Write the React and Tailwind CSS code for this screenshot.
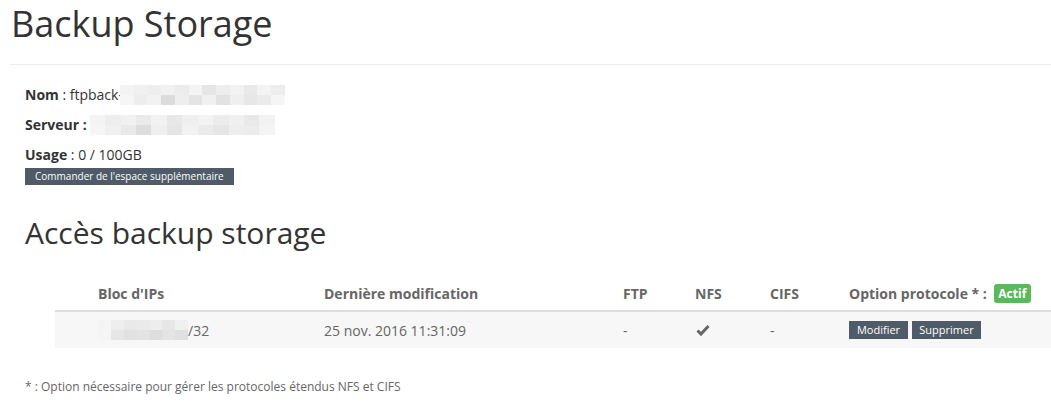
import React from "react";

// Pixelated placeholder used where the screenshot hides values
function Blur({ rows, className }) {
  return (
    <span className={"inline-flex flex-col align-middle " + className}>
      {rows.map((row, i) => (
        <span key={i} className="flex flex-1">
          {row.map((c, j) => (
            <span key={j} className="flex-1" style={{ backgroundColor: c }} />
          ))}
        </span>
      ))}
    </span>
  );
}

const nomBlur = [
  ["#f3f3f3", "#f0f0f0", "#eeeeee", "#f1f1f1", "#ececec", "#f4f4f4", "#e6e6e6", "#eeeeee", "#f2f2f2", "#e9e9e9", "#f3f3f3", "#ededed"],
  ["#f6f6f6", "#ededed", "#f2f2f2", "#dcdcdc", "#eeeeee", "#e4e4e4", "#f0f0f0", "#e2e2e2", "#efefef", "#e7e7e7", "#ebebeb", "#f5f5f5"],
];
const serveurBlur = [
  ["#f4f4f4", "#ededed", "#f1f1f1", "#eaeaea", "#f2f2f2", "#e8e8e8", "#efefef", "#f3f3f3", "#ececec", "#f0f0f0", "#e9e9e9", "#f2f2f2"],
  ["#f6f6f6", "#f0f0f0", "#e9e9e9", "#dddddd", "#efefef", "#e5e5e5", "#f2f2f2", "#ebebeb", "#e6e6e6", "#eeeeee", "#ececec", "#f4f4f4"],
];
const ipBlur = [
  ["#f4f4f4", "#eeeeee", "#e9e9e9", "#eaeaea", "#ededed", "#e7e7e7", "#f0f0f0"],
  ["#f5f5f5", "#e6e6e6", "#e1e1e1", "#e3e3e3", "#dedede", "#e4e4e4", "#e0e0e0"],
];

function Check() {
  return (
    <svg width="14" height="12" viewBox="0 0 14 12" className="inline-block">
      <path d="M1.5 6.5 L5 10 L12.5 2" fill="none" stroke="#666" strokeWidth="3" />
    </svg>
  );
}

export default function App() {
  return (
    <div className="min-h-[403px] bg-white text-[#333] font-['Open_Sans',sans-serif] text-[14px]">
      {/* Title */}
      <div className="pl-[10px] pt-[4px]">
        <h1 className="text-[36px] leading-[40px] pl-[1px]">Backup Storage</h1>
        <div className="mt-[20px] border-t border-[#eeeeee]" />
      </div>

      {/* Infos */}
      <div className="pl-[25px] pt-[20px]">
        <p className="h-[20px] leading-[20px] mb-[10px] flex items-center">
          <b>Nom</b>&nbsp;: ftpback-
          <Blur rows={nomBlur} className="w-[165px] h-[20px] -ml-[3px]" />
        </p>
        <p className="h-[20px] leading-[20px] mb-[10px] flex items-center">
          <b>Serveur :</b>
          <Blur rows={serveurBlur} className="w-[185px] h-[20px] ml-[3px]" />
        </p>
        <p className="leading-[20px]">
          <b>Usage</b> : 0 / 100GB
        </p>
        <button className="mt-[3px] block h-[17px] px-[10px] bg-[#4f5b66] text-white text-[10px] leading-[17px]">
          Commander de l'espace supplémentaire
        </button>

        <h2 className="mt-[31px] text-[30px] leading-[33px]">Accès backup storage</h2>
      </div>

      {/* Table */}
      <div className="ml-[55px] mt-[27px] text-[#666]">
        <div className="grid grid-cols-[43px_226px_299px_72px_75px_79px_1fr] h-[36px] items-center font-bold border-b-2 border-[#dddddd]">
          <div />
          <div>Bloc d'IPs</div>
          <div>Dernière modification</div>
          <div>FTP</div>
          <div>NFS</div>
          <div>CIFS</div>
          <div className="flex items-center">
            Option protocole * :
            <span className="ml-[7px] h-[19px] w-[37px] rounded-[3px] bg-[#5cb85c] text-white text-[12px] leading-[19px] text-center">
              Actif
            </span>
          </div>
        </div>
        <div className="grid grid-cols-[43px_226px_299px_72px_75px_79px_1fr] h-[36px] items-center bg-[#f7f7f7]">
          <div />
          <div className="flex items-center">
            <Blur rows={ipBlur} className="w-[90px] h-[20px]" />
            /32
          </div>
          <div>25 nov. 2016 11:31:09</div>
          <div>-</div>
          <div className="flex pl-[1px]">
            <Check />
          </div>
          <div>-</div>
          <div className="flex gap-[4px]">
            <button className="h-[18px] w-[59px] bg-[#4f5b66] text-white text-[11px] leading-[18px]">Modifier</button>
            <button className="h-[18px] w-[69px] bg-[#4f5b66] text-white text-[11px] leading-[18px]">Supprimer</button>
          </div>
        </div>
      </div>

      <p className="pl-[25px] mt-[30px] text-[12px] leading-[17px] text-[#666]">
        * : Option nécessaire pour gérer les protocoles étendus NFS et CIFS
      </p>
    </div>
  );
}
